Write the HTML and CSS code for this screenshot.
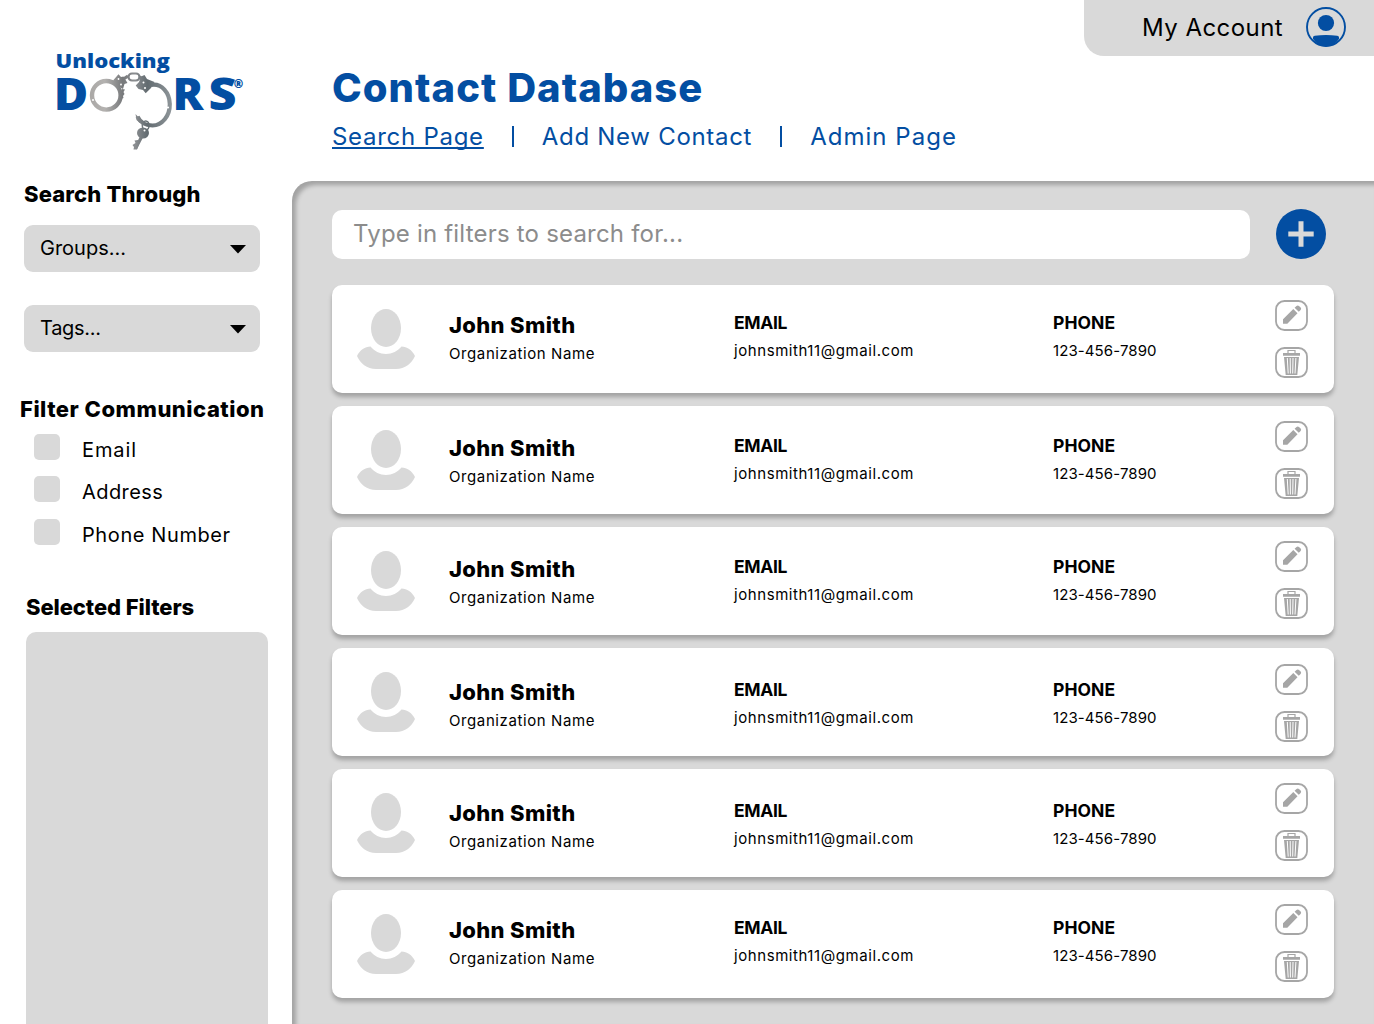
FILE: index.html
```html
<!DOCTYPE html>
<html lang="en">
<head>
<meta charset="utf-8">
<title>Contact Database</title>
<link rel="stylesheet" href="styles.css">
</head>
<body>
<svg class="sprite" aria-hidden="true">
  <symbol id="avatar" viewBox="0 0 58 60">
    <ellipse cx="29" cy="19" rx="15" ry="19"/>
    <path d="M0 47C3 41 8 37.500 13.500 37.500C17 42 23 45 29 45C35 45 41 42 44.500 37.500C50 37.500 55 41 58 47C55 54 48 60 39 60H19C10 60 3 54 0 47Z"/>
  </symbol>
  <symbol id="pencil" viewBox="0 0 33 31">
    <rect x="1" y="1" width="31" height="29" rx="8.500" fill="none" stroke="#a6a6a6" stroke-width="1.800"/>
    <path d="M8 19.200L18.300 9L22.500 13.200L12.300 23.800H8ZM19.600 7.700L21.500 5.900C22.200 5.200 23.300 5.200 24 5.900L25.600 7.500C26.300 8.200 26.300 9.200 25.600 9.900L23.800 11.800Z"/>
  </symbol>
  <symbol id="trash" viewBox="0 0 33 31">
    <rect x="1" y="1" width="31" height="29" rx="8.500" fill="none" stroke="#a6a6a6" stroke-width="1.800"/>
    <path d="M13 6.500V3.500H20V6.500" fill="none" stroke="#a6a6a6" stroke-width="1.200"/>
    <path d="M8 6H25V8.700H8ZM9 10H24L22.300 28H10.700Z"/>
    <path d="M12.300 11L13.200 26.500M15.200 11L15.400 26.500M18 11L17.700 26.500M20.900 11L20 26.500" stroke="#fff" stroke-width="1"/>
  </symbol>
</svg>
<div class="page">
  <aside class="sidebar">
    <svg class="logo" viewBox="0 0 200 110" role="img" aria-label="Unlocking Doors">
      <defs>
        <linearGradient id="steel" x1="40" y1="0" x2="122" y2="0" gradientUnits="userSpaceOnUse">
          <stop offset="0" stop-color="#aaa8a6"/><stop offset=".18" stop-color="#b4b2b0"/>
          <stop offset=".4" stop-color="#77797b"/><stop offset=".55" stop-color="#8b8e91"/>
          <stop offset=".7" stop-color="#626b70"/><stop offset="1" stop-color="#8f969a"/>
        </linearGradient>
      </defs>
      <g class="logo-text">
        <text x="5.500" y="21.700" font-size="18.500" textLength="114.500" lengthAdjust="spacingAndGlyphs">Unlocking</text>
        <text x="3.800" y="64" font-size="43.500" textLength="34.500" lengthAdjust="spacingAndGlyphs">D</text>
        <text x="122.500" y="64" font-size="43.500" textLength="31" lengthAdjust="spacingAndGlyphs">R</text>
        <text x="158.500" y="64" font-size="43.500" textLength="28" lengthAdjust="spacingAndGlyphs">S</text>
        <text x="183.700" y="41.500" font-size="11.500">®</text>
      </g>
      <g fill="none" stroke="url(#steel)">
        <circle cx="56.300" cy="49.300" r="14.300" stroke-width="4.400"/>
        <path d="M101 39C112 37 119.500 47 119.800 58C120 70 112 79.500 102.500 79.500C95 79.500 90 76 87.500 70.500" stroke-width="4.200"/>
        <rect x="78.500" y="27.500" width="11" height="7" rx="3.500" stroke-width="2.200"/>
        <path d="M72 34L78 30M89 31L95 34" stroke-width="3.200"/>
        <ellipse cx="95.700" cy="79.500" rx="3.400" ry="4.500" stroke-width="1.500"/>
        <path d="M92 90L85.500 102.500" stroke-width="3.200"/>
      </g>
      <g fill="url(#steel)">
        <path d="M63 34.500L68.500 28.300L71 31L73.500 30.500L77.500 37L74.500 38L73 43L69.500 41ZM85.700 39.500L89 36L91 30.500L94.500 29L97 33L104.500 36L101 42L95.700 47.300L93 44L88.500 43Z"/>
        <path d="M72 43L75 43.500L73.500 46L74.500 48L73 50L73.500 52L71 53ZM85.500 68L92 75L90 77L86.500 74Z"/>
        <ellipse cx="93" cy="87" rx="6" ry="5.500"/>
        <path d="M88 94L84.500 94.500L85.500 97L82.500 99L84 101L83.500 103.500H87L90 96Z"/>
      </g>
      <g fill="#fff"><circle cx="43" cy="54" r="1"/><circle cx="118" cy="61.500" r="1.100"/><circle cx="68.500" cy="33" r=".9"/><circle cx="71" cy="38.500" r=".9"/><circle cx="93.500" cy="36.500" r="1"/><circle cx="95" cy="42" r="1"/><circle cx="94.500" cy="84.500" r="1"/></g>
    </svg>

    <h2 class="side-title search-title">Search Through</h2>
    <div class="selects">
      <div class="select"><span>Groups...</span><svg width="16" height="9"><path d="M0 0H16L8 8.500Z"/></svg></div>
      <div class="select tags"><span>Tags...</span><svg width="16" height="9"><path d="M0 0H16L8 8.500Z"/></svg></div>
    </div>

    <h2 class="side-title filter-title">Filter Communication</h2>
    <div class="checks">
      <label class="check email"><i></i><span>Email</span></label>
      <label class="check address"><i></i><span>Address</span></label>
      <label class="check phone"><i></i><span>Phone Number</span></label>
    </div>

    <h2 class="side-title selected-title">Selected Filters</h2>
    <div class="selected"></div>
  </aside>

  <main class="main">
    <header class="header">
      <div class="account">
        <span>My Account</span>
        <svg width="40" height="40" viewBox="0 0 40 40">
          <circle cx="20" cy="20" r="19" fill="none" stroke="#034ea2" stroke-width="1.900"/>
          <circle cx="20" cy="16" r="8.100" fill="#034ea2"/>
          <path d="M7 32V30.500Q7 28.900 8.800 28.700Q20 27.300 31.200 28.700Q33 28.900 33 30.500V32Q28 39.500 20 39.500Q12 39.500 7 32Z" fill="#034ea2"/>
        </svg>
      </div>
      <h1>Contact Database</h1>
      <nav>
        <a class="nav-search">Search Page</a><i></i><a class="nav-add">Add New Contact</a><i></i><a class="nav-admin">Admin Page</a>
      </nav>
    </header>

    <section class="panel">
      <div class="toolbar">
        <div class="search">Type in filters to search for...</div>
        <svg class="add" width="50" height="50" viewBox="0 0 50 50"><circle cx="25" cy="25" r="25" fill="#034ea2"/><path d="M25 12.300V37.700M12.300 25H37.700" stroke="#d9d9d9" stroke-width="5"/></svg>
      </div>
      <div class="cards">
        <article class="card">
          <svg class="avatar"><use href="#avatar"/></svg>
          <div class="who"><h3>John Smith</h3><p>Organization Name</p></div>
          <div class="mail"><h4>EMAIL</h4><p>johnsmith11@gmail.com</p></div>
          <div class="tel"><h4>PHONE</h4><p>123-456-7890</p></div>
          <div class="actions"><svg><use href="#pencil"/></svg><svg><use href="#trash"/></svg></div>
        </article>
        <article class="card text-low">
          <svg class="avatar"><use href="#avatar"/></svg>
          <div class="who"><h3>John Smith</h3><p>Organization Name</p></div>
          <div class="mail"><h4>EMAIL</h4><p>johnsmith11@gmail.com</p></div>
          <div class="tel"><h4>PHONE</h4><p>123-456-7890</p></div>
          <div class="actions"><svg><use href="#pencil"/></svg><svg><use href="#trash"/></svg></div>
        </article>
        <article class="card text-low actions-high">
          <svg class="avatar"><use href="#avatar"/></svg>
          <div class="who"><h3>John Smith</h3><p>Organization Name</p></div>
          <div class="mail"><h4>EMAIL</h4><p>johnsmith11@gmail.com</p></div>
          <div class="tel"><h4>PHONE</h4><p>123-456-7890</p></div>
          <div class="actions"><svg><use href="#pencil"/></svg><svg><use href="#trash"/></svg></div>
        </article>
        <article class="card text-lower actions-low">
          <svg class="avatar"><use href="#avatar"/></svg>
          <div class="who"><h3>John Smith</h3><p>Organization Name</p></div>
          <div class="mail"><h4>EMAIL</h4><p>johnsmith11@gmail.com</p></div>
          <div class="tel"><h4>PHONE</h4><p>123-456-7890</p></div>
          <div class="actions"><svg><use href="#pencil"/></svg><svg><use href="#trash"/></svg></div>
        </article>
        <article class="card text-lower actions-high">
          <svg class="avatar"><use href="#avatar"/></svg>
          <div class="who"><h3>John Smith</h3><p>Organization Name</p></div>
          <div class="mail"><h4>EMAIL</h4><p>johnsmith11@gmail.com</p></div>
          <div class="tel"><h4>PHONE</h4><p>123-456-7890</p></div>
          <div class="actions"><svg><use href="#pencil"/></svg><svg><use href="#trash"/></svg></div>
        </article>
        <article class="card actions-high">
          <svg class="avatar"><use href="#avatar"/></svg>
          <div class="who"><h3>John Smith</h3><p>Organization Name</p></div>
          <div class="mail"><h4>EMAIL</h4><p>johnsmith11@gmail.com</p></div>
          <div class="tel"><h4>PHONE</h4><p>123-456-7890</p></div>
          <div class="actions"><svg><use href="#pencil"/></svg><svg><use href="#trash"/></svg></div>
        </article>
      </div>
    </section>
  </main>
</div>
</body>
</html>
```
FILE: styles.css
```css
* { box-sizing: border-box; }
body { margin: 0; font-family: Inter, sans-serif; color: #000; background: #fff; }
h1, h2, h3, h4, p { margin: 0; }
svg { display: block; flex: none; }
span, a, h1, h2, h3, h4, p { white-space: nowrap; }
.sprite { width: 0; height: 0; position: absolute; }

.page { display: grid; grid-template-columns: 292px 1fr; height: 1024px; overflow: hidden; }

/* Sidebar */
.sidebar { display: flex; flex-direction: column; padding-top: 46px; }
.logo { width: 200px; height: 110px; margin-left: 50px; }
.logo-text { font-family: "Open Sans", sans-serif; font-weight: 800; fill: #034ea2; }
.side-title { font-size: 22px; line-height: 30px; font-weight: 800; }
.search-title { margin: 23px 0 0 24px; letter-spacing: .15px; }
.filter-title { margin: 42px 0 0 20px; letter-spacing: .5px; }
.selected-title { margin: 47px 0 0 26px; letter-spacing: -.08px; }
.selects { display: flex; flex-direction: column; gap: 33px; margin: 16px 0 0 24px; width: 236px; }
.select { display: flex; align-items: center; justify-content: space-between; height: 47px; padding: 0 14px 2px 16px; border-radius: 9px; background: #d9d9d9; font-size: 20px; }
.select svg { margin-top: 3px; }
.tags { letter-spacing: -.3px; }
.checks { display: flex; flex-direction: column; gap: 16px; margin: 10px 0 0 34px; }
.check { display: flex; align-items: center; gap: 22px; height: 26px; font-size: 20px; }
.check i { width: 26px; height: 26px; border-radius: 5px; background: #d9d9d9; }
.check span { padding-top: 6px; }
.email { letter-spacing: .9px; }
.address { letter-spacing: .42px; }
.phone { margin-top: 1px; letter-spacing: .6px; }
.selected { flex: 1; width: 242px; margin: 10px 0 -12px 26px; border-radius: 10px; background: #d9d9d9; }

/* Header */
.main { display: flex; flex-direction: column; }
.header { display: flex; flex-direction: column; height: 181px; padding-left: 40px; color: #034ea2; }
.account { display: flex; align-items: center; justify-content: space-between; align-self: flex-end; width: 290px; height: 56px; padding: 0 28px 2px 58px; border-bottom-left-radius: 20px; background: #d9d9d9; color: #000; font-size: 24px; letter-spacing: .45px; }
h1 { margin-top: 8px; font-size: 40px; line-height: 48px; font-weight: 800; letter-spacing: 1.05px; }
nav { display: flex; align-items: center; height: 32px; margin-top: 8px; font-size: 24px; }
nav i { width: 2px; height: 21px; background: #034ea2; margin: 0 28px; }
.nav-search { letter-spacing: .72px; text-decoration: underline; text-decoration-thickness: 1.5px; text-underline-offset: 2px; text-decoration-skip-ink: none; }
.nav-add { letter-spacing: .7px; }
.nav-admin { letter-spacing: 1.02px; }

/* Contact list */
.panel { flex: 1; padding: 28px 40px 0; border-top-left-radius: 20px; background: #d9d9d9; box-shadow: inset 4px 4px 4px rgba(0, 0, 0, .25); }
.toolbar { display: flex; align-items: center; gap: 26px; }
.search { width: 918px; height: 49px; padding-left: 21px; border-radius: 10px; background: #fff; color: #8c8c8c; font-size: 24px; line-height: 48px; letter-spacing: .2px; margin-top: 1px; }
.cards { display: flex; flex-direction: column; gap: 13px; margin-top: 26px; }
.card { --shift: 0px; --actions: 15px; display: grid; grid-template-columns: 92px 285px 319px 222px 33px; width: 1002px; height: 108px; padding-left: 25px; border-radius: 10px; background: #fff; box-shadow: 0 4px 4px rgba(0, 0, 0, .25); }
.avatar { width: 58px; height: 60px; margin-top: 24px; fill: #d9d9d9; }
.who { padding-top: calc(26px + var(--shift)); }
.mail, .tel { padding-top: calc(25px + var(--shift)); }
.who h3 { font-size: 22px; line-height: 28px; font-weight: 800; letter-spacing: .35px; }
.who p { font-size: 15px; line-height: 20px; margin-top: 4.500px; letter-spacing: .6px; }
h4 { font-size: 17.5px; line-height: 26px; font-weight: 700; }
.mail h4 { letter-spacing: -.36px; }
.tel h4 { letter-spacing: .06px; }
.mail p, .tel p { font-size: 15px; line-height: 20px; margin-top: 5px; }
.mail p { letter-spacing: .57px; }
.tel p { letter-spacing: .1px; }
.actions { display: flex; flex-direction: column; gap: 16px; padding-top: var(--actions); }
.actions svg { width: 33px; height: 31px; fill: #a6a6a6; }
.text-low { --shift: 2px; }
.text-lower { --shift: 4px; }
.actions-high { --actions: 14px; }
.actions-low { --actions: 16px; }
```
